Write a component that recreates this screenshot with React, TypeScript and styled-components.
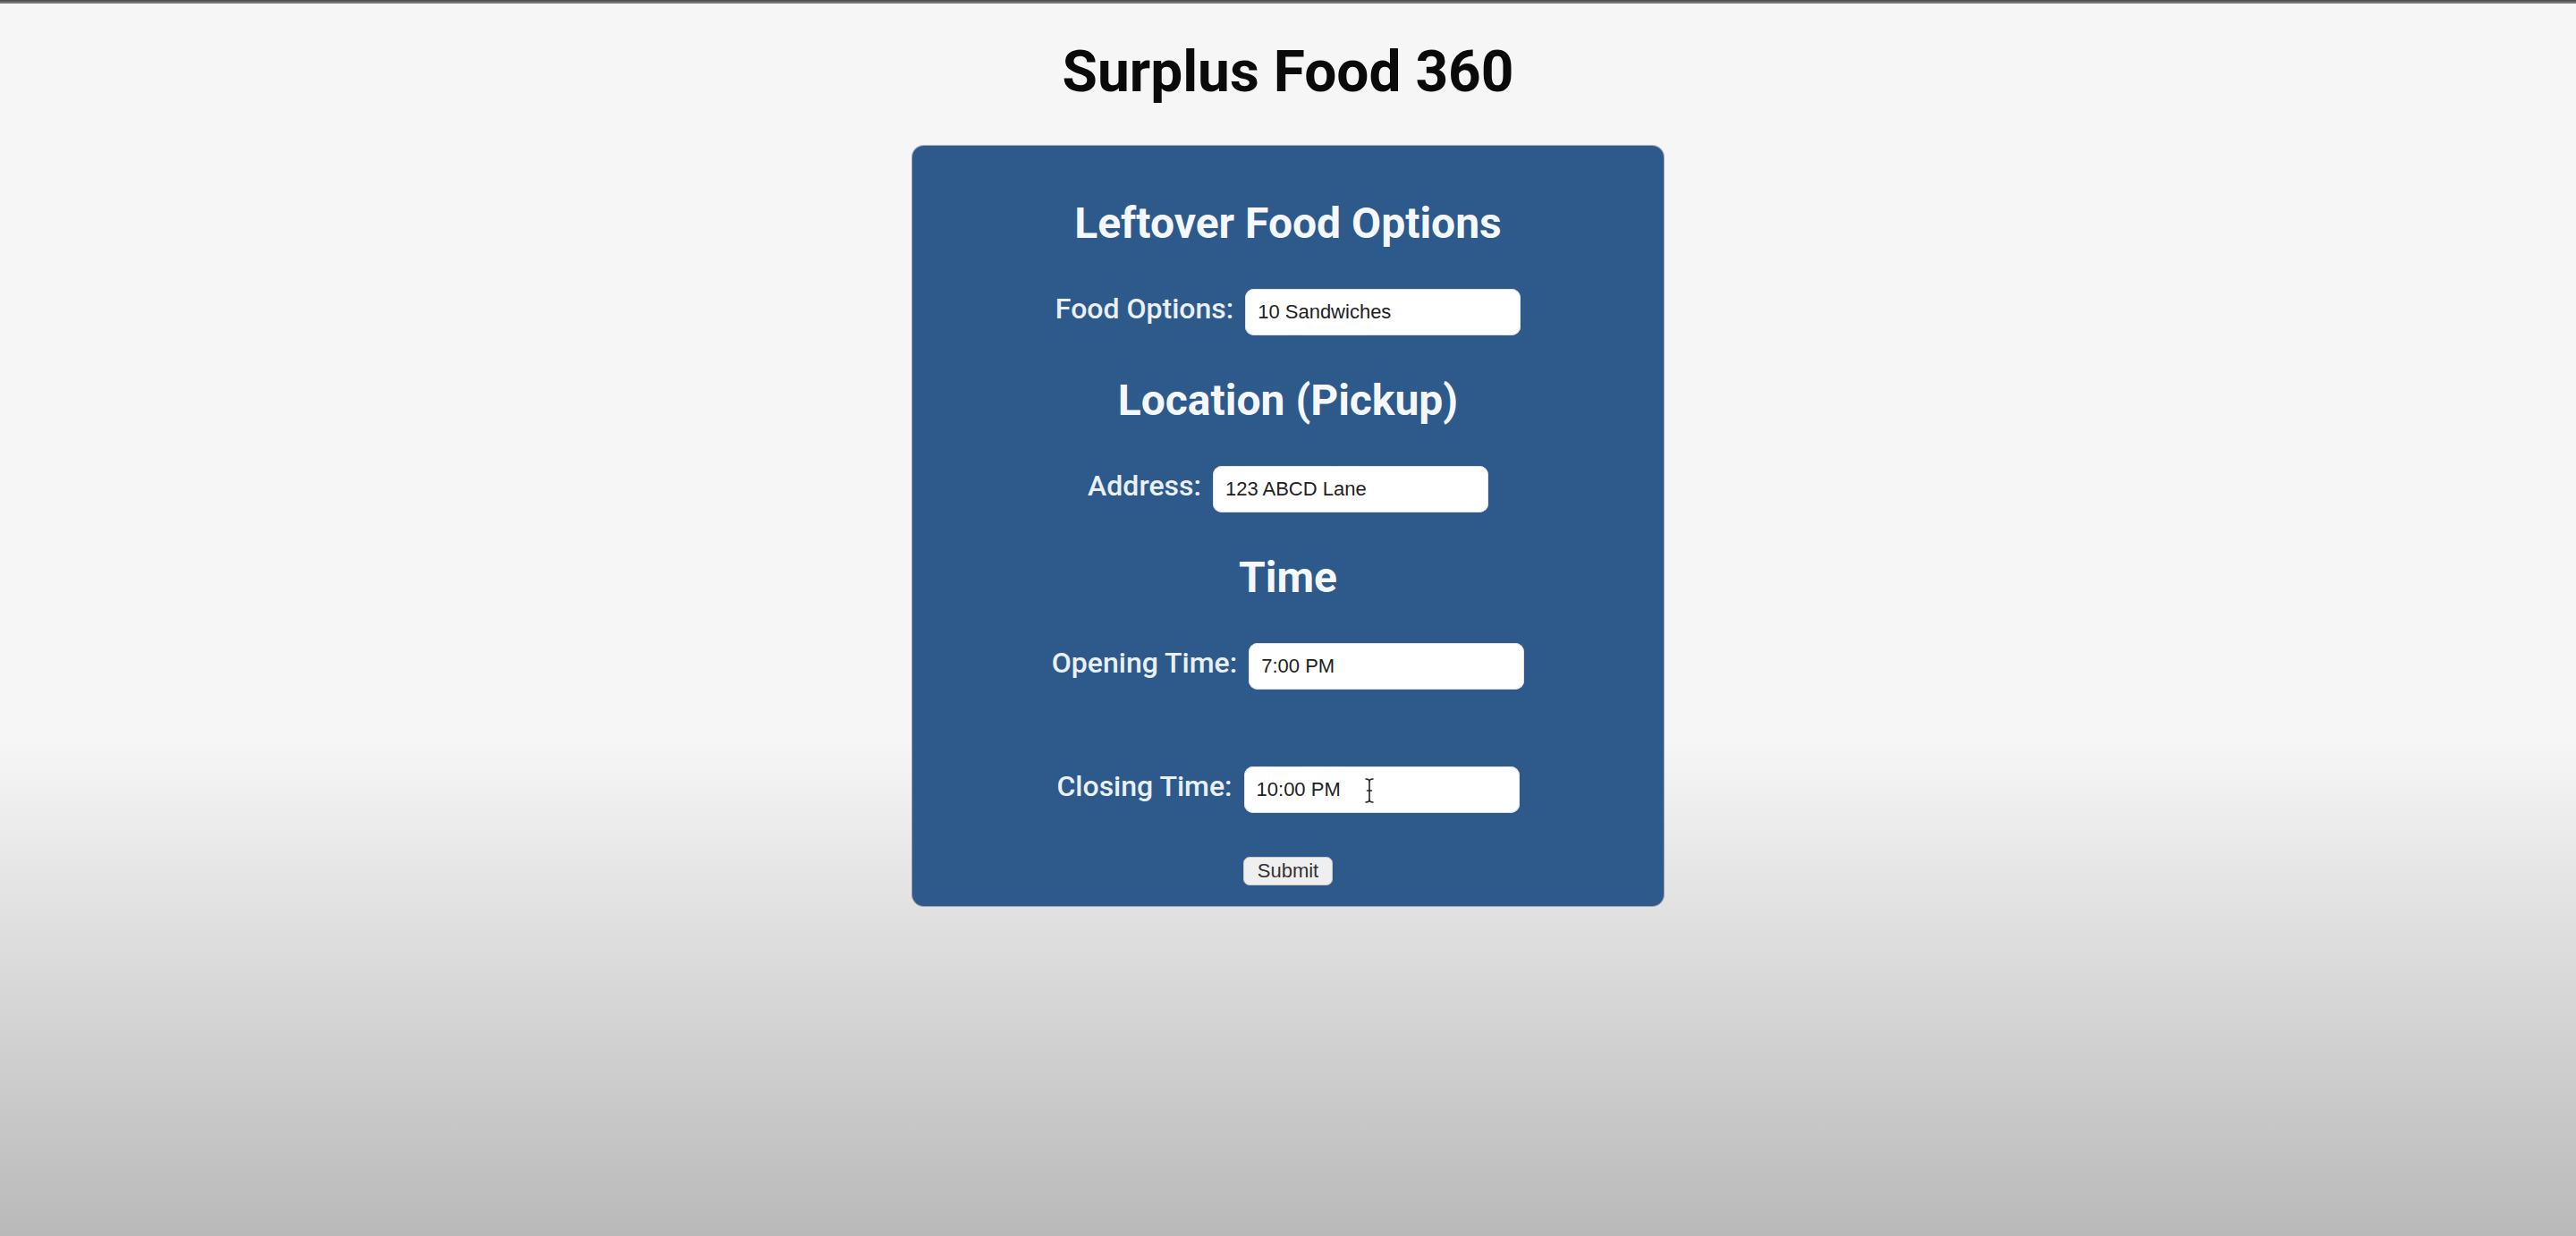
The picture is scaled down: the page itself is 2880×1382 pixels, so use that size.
import React from "react";
import styled, { createGlobalStyle } from "styled-components";

const GlobalStyle = createGlobalStyle`
  * { box-sizing: border-box; }
  html, body {
    margin: 0;
    padding: 0;
  }
  body {
    min-height: 100vh;
    font-family: Roboto, "Noto Sans", Arial, sans-serif;
    background: linear-gradient(to bottom, #f6f6f6 0%, #f6f6f6 60%, #b9b9b9 100%);
  }
`;

const Page = styled.div`
  min-height: 100vh;
  display: flex;
  flex-direction: column;
  align-items: center;
`;

const TopBar = styled.div`
  align-self: stretch;
  height: 4px;
  background: linear-gradient(to bottom, #454545, #8a8a8a);
`;

const Title = styled.h1`
  margin: 45px 0 0;
  font-family: Roboto, Arial, sans-serif;
  font-weight: 700;
  font-size: 64px;
  line-height: 1;
  color: #0a0a0a;
`;

const Card = styled.form`
  margin-top: 50px;
  width: 840px;
  background: #2d5a8b;
  border-radius: 13px;
  box-shadow: 0 0 0 1px rgba(20, 45, 80, 0.35);
  padding: 63px 0 23px;
  display: flex;
  flex-direction: column;
  align-items: center;
  gap: 49px;
`;

const SectionHeading = styled.h2`
  margin: 0;
  font-family: Roboto, Arial, sans-serif;
  font-weight: 700;
  font-size: 48px;
  line-height: 1;
  color: #f4f7fb;
`;

const Row = styled.div<{ $extraTop?: number }>`
  display: flex;
  align-items: baseline;
  gap: 13px;
  margin-top: ${(p) => p.$extraTop ?? 0}px;
`;

const Label = styled.label`
  font-family: Roboto, Arial, sans-serif;
  font-weight: 500;
  font-size: 32px;
  color: #e9eff7;
`;

const InputWrap = styled.div`
  position: relative;
  display: inline-flex;
`;

const TextInput = styled.input`
  width: 308px;
  height: 52px;
  padding: 0 14px;
  border: none;
  border-radius: 10px;
  background: #ffffff;
  box-shadow: inset 0 0 0 1px #e4e4e4;
  font-family: "Liberation Sans", Arial, sans-serif;
  font-size: 22px;
  color: #222;
  outline: none;
`;

const Cursor = styled.svg`
  position: absolute;
  left: 134px;
  top: 12px;
  pointer-events: none;
`;

const SubmitButton = styled.button`
  height: 32px;
  padding: 0 15px;
  border: 1px solid #c9c9c9;
  border-radius: 7px;
  background: #efefef;
  font-family: "Liberation Sans", Arial, sans-serif;
  font-size: 22px;
  line-height: 1;
  color: #333;
`;

export default function App() {
  return (
    <>
      <GlobalStyle />
      <Page>
        <TopBar />
        <Title>Surplus Food 360</Title>
        <Card onSubmit={(e) => e.preventDefault()}>
          <SectionHeading>Leftover Food Options</SectionHeading>
          <Row>
            <Label htmlFor="food">Food Options:</Label>
            <InputWrap>
              <TextInput id="food" defaultValue="10 Sandwiches" />
            </InputWrap>
          </Row>
          <SectionHeading>Location (Pickup)</SectionHeading>
          <Row>
            <Label htmlFor="address">Address:</Label>
            <InputWrap>
              <TextInput id="address" defaultValue="123 ABCD Lane" />
            </InputWrap>
          </Row>
          <SectionHeading>Time</SectionHeading>
          <Row>
            <Label htmlFor="open">Opening Time:</Label>
            <InputWrap>
              <TextInput id="open" defaultValue="7:00 PM" />
            </InputWrap>
          </Row>
          <Row $extraTop={37}>
            <Label htmlFor="close">Closing Time:</Label>
            <InputWrap>
              <TextInput id="close" defaultValue="10:00 PM" />
              <Cursor width="12" height="30" viewBox="0 0 12 30">
                <path
                  d="M2 2 Q6 2 6 5 Q6 2 10 2 M6 5 V25 M2 28 Q6 28 6 25 Q6 28 10 28 M3.5 15 H8.5"
                  fill="none"
                  stroke="#ffffff"
                  strokeWidth="3.2"
                  strokeLinecap="round"
                />
                <path
                  d="M2 2 Q6 2 6 5 Q6 2 10 2 M6 5 V25 M2 28 Q6 28 6 25 Q6 28 10 28 M3.5 15 H8.5"
                  fill="none"
                  stroke="#222"
                  strokeWidth="1.6"
                  strokeLinecap="round"
                />
              </Cursor>
            </InputWrap>
          </Row>
          <SubmitButton type="submit">Submit</SubmitButton>
        </Card>
      </Page>
    </>
  );
}
